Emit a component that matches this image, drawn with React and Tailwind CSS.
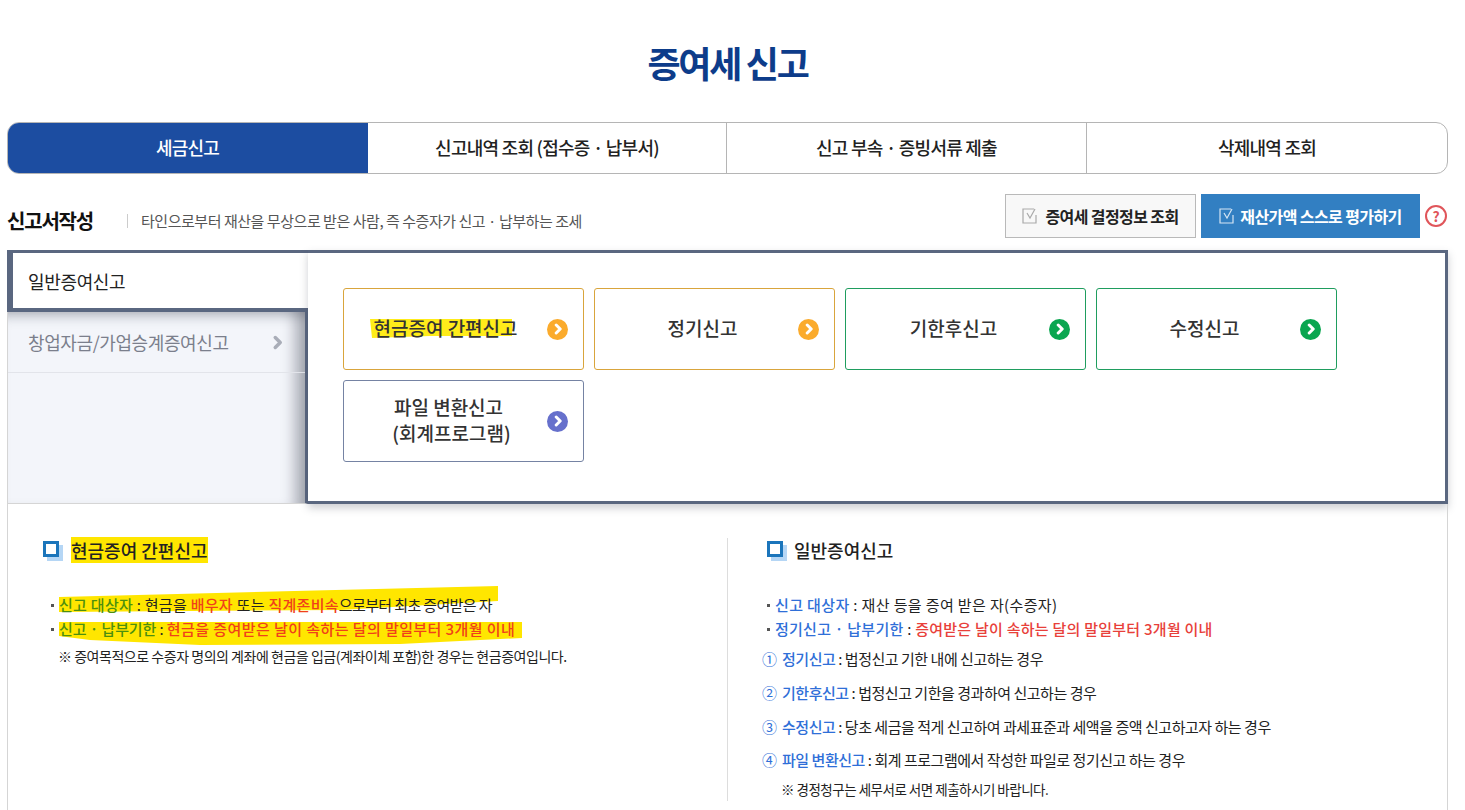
import React from 'react';

const FONT = { fontFamily: '"Noto Sans CJK KR", "Noto Sans", sans-serif' };

function Chevron({ color = '#fff', size = 12, width = 3 }) {
  return (
    <svg viewBox="0 0 12 12" width={size} height={size} fill="none" stroke={color} strokeWidth={width} strokeLinecap="round" strokeLinejoin="round">
      <path d="M4.2 2 8.2 6 4.2 10" />
    </svg>
  );
}

function CheckIcon({ color }) {
  return (
    <svg viewBox="0 0 16 16" width="16" height="16" fill="none" stroke={color} strokeWidth="1.2" className="shrink-0">
      <path d="M12 1H1v14h13V7" />
      <path d="M5 5l3 5 5-9" />
    </svg>
  );
}

function Card({ color, dot, children }) {
  return (
    <button className="relative flex h-[82px] w-[241px] items-center rounded-[3px] border bg-white pl-3 pr-[15px] text-[19px] leading-[26px] text-[#333]" style={{ borderColor: color }}>
      <span className="relative -mt-[2px] flex-1 text-center font-medium">{children}</span>
      <span className="flex h-[21px] w-[21px] shrink-0 items-center justify-center rounded-full" style={{ backgroundColor: dot }}>
        <Chevron />
      </span>
    </button>
  );
}

function SectionTitle({ children, mark }) {
  return (
    <div className={`flex h-6 items-center ${mark ? 'gap-3' : 'gap-[11px]'}`}>
      <span className="mb-[2px] h-[16px] w-[16px] shrink-0 border-[3px] border-[#1b75bb] bg-white shadow-[4px_4px_0_#b5d6f5]" />
      <h3 className="relative text-[18px] font-medium leading-6 text-[#222]">
        {mark && <span className="absolute -bottom-[1px] -top-[1px] left-0 right-0 bg-[#ffe600]" />}
        <span className="relative">{children}</span>
      </h3>
    </div>
  );
}

function Item({ n, label, children, className }) {
  return (
    <p className={`flex h-[22px] items-center text-[15px] tracking-[-0.47px] text-[#222] ${className}`}>
      <span className="w-[20px] shrink-0 text-[15px] text-[#2f6fd8]">{n}</span>
      <span className="font-medium text-[#2f6fd8]">{label}</span>
      <span className="whitespace-pre"> : {children}</span>
    </p>
  );
}

function Dot() {
  return <span className="mr-[5px] h-[3px] w-[3px] shrink-0 bg-[#555]" />;
}

export default function App() {
  return (
    <div className="flex h-screen flex-col overflow-hidden bg-white pl-[7px] pr-[17px]" style={FONT}>
      {/* 제목 */}
      <h1 className="pt-[36px] text-center text-[36px] font-bold leading-[52px] tracking-[-2.3px] text-[#0d3c8a]">증여세 신고</h1>

      {/* 상단 탭 */}
      <nav className="mt-[34px] flex h-[52px] overflow-hidden rounded-xl border border-[#b5b5b5] text-[18px] font-medium tracking-[-0.75px] text-[#222]">
        <a className="-my-px -ml-px flex w-[361px] items-center justify-center bg-[#1c4da1] pb-[2px] text-white">세금신고</a>
        <a className="flex w-[359px] items-center justify-center border-r border-[#b5b5b5] pb-[2px]">신고내역 조회 (접수증 · 납부서)</a>
        <a className="flex w-[360px] items-center justify-center border-r border-[#b5b5b5] pb-[2px]">신고 부속 · 증빙서류 제출</a>
        <a className="flex flex-1 items-center justify-center pb-[2px]">삭제내역 조회</a>
      </nav>

      {/* 신고서 작성 헤더 */}
      <div className="mt-5 flex h-[44px] items-center pr-px">
        <h2 className="mt-[10px] w-[120px] text-[20px] font-bold tracking-[-1.2px] text-[#111]">신고서작성</h2>
        <span className="mt-[10px] h-[14px] w-px bg-[#ccc]" />
        <p className="ml-[13px] mt-[10px] text-[15px] tracking-[-0.46px] text-[#555]">타인으로부터 재산을 무상으로 받은 사람, 즉 수증자가 신고 · 납부하는 조세</p>
        <button className="ml-auto flex h-[44px] w-[191px] items-center justify-center gap-[7px] border border-[#b9b9b9] bg-[#f8f8f8] text-[16px] font-bold tracking-[-0.6px] text-[#222]">
          <CheckIcon color="#a9a9a9" />증여세 결정정보 조회
        </button>
        <button className="ml-[5px] flex h-[44px] w-[219px] items-center justify-center gap-[5px] bg-[#327fc2] text-[16px] font-bold tracking-[-0.6px] text-white">
          <CheckIcon color="#d5e5f3" />재산가액 스스로 평가하기
        </button>
        <span className="ml-[5px] flex h-[22px] w-[22px] items-center justify-center rounded-full border-2 border-[#e0555a] text-[14px] font-bold leading-none text-[#e0555a]">?</span>
      </div>

      {/* 신고 유형 패널 */}
      <div className="mt-3 flex h-[254px]">
        <div className="flex w-[301px] shrink-0 flex-col">
          <div className="flex h-[62px] items-start border-b-4 border-l-[6px] border-t-[3px] border-[#5a6780] bg-white pl-[15px] pt-[15px] text-[18px] leading-[26px] tracking-[-0.35px] text-[#222]">일반증여신고</div>
          <div className="flex-1 border-b border-l border-r-[3px] border-b-[#d5d5d5] border-l-[#d5d5d5] border-r-[#5a6780] bg-[#f3f5fa] shadow-[inset_-20px_0_14px_-10px_rgba(60,65,80,0.4),inset_0_14px_12px_-10px_rgba(60,65,80,0.35)]">
            <div className="flex h-[61px] items-center justify-between border-b border-[#e2e4ea] pl-[20px] pr-[20px] pt-px text-[18px] tracking-[-0.4px] text-[#7b7f8c]">
              창업자금/가업승계증여신고
              <Chevron color="#a9adb8" size={15} width={2.8} />
            </div>
          </div>
        </div>
        <div className="flex-1 border-y-[3px] border-r-[3px] border-[#5a6780] bg-white pl-[35px] pt-[35px] shadow-[0_4px_8px_rgba(60,65,80,0.25)]">
          <div className="grid grid-cols-[repeat(4,241px)] gap-[10px]">
            <Card color="#d9a53c" dot="#fbab2c">
              <svg viewBox="0 0 142 19" preserveAspectRatio="none" className="absolute left-[14px] top-[4px] h-[19px] w-[142px]">
                <path d="M0 0H142V17H60L2 19Z" fill="#ffec1a" />
              </svg>
              <span className="relative -left-[6px]">현금증여 간편신고</span>
            </Card>
            <Card color="#d9a53c" dot="#fbab2c">정기신고</Card>
            <Card color="#1f9d5e" dot="#0aa650">기한후신고</Card>
            <Card color="#1f9d5e" dot="#0aa650">수정신고</Card>
            <Card color="#7583a3" dot="#6670cc"><span className="relative -left-[3px]">파일 변환신고</span><br />(회계프로그램)</Card>
          </div>
        </div>
      </div>

      {/* 안내 */}
      <div className="flex min-h-0 flex-1 border-x border-[#d5d5d5] pb-[9px] pt-[34px]">
        <section className="w-[720px] border-r border-[#ddd] pl-[35px]">
          <SectionTitle mark>현금증여 간편신고</SectionTitle>
          <div className="relative mt-[31px] pl-[8px] text-[15px] tracking-[-0.1px] text-[#222]">
            <svg width="490" height="66" viewBox="0 0 490 66" className="absolute left-0 -top-[9px]">
              <path d="M16 13 L455 2 L455 17 L297 26 L16 28Z" fill="#ffe600" />
              <path d="M16 38 L479 38 L479 54 L357 60 L157 61 L47 56 L16 52Z" fill="#ffe600" />
            </svg>
            <p className="relative flex h-6 items-center whitespace-pre tracking-[0.28px]">
              <Dot />
              <span className="font-medium text-[#4c8f0f]">신고 대상자</span> : 현금을 <span className="font-medium text-[#f0401a]">배우자</span> 또는 <span className="font-medium text-[#f0401a]">직계존비속</span><span className="tracking-[-0.63px]">으로부터 최초 증여받은 자</span>
            </p>
            <p className="relative flex h-6 items-center whitespace-pre">
              <Dot />
              <span className="font-medium text-[#4c8f0f]">신고 · 납부기한</span> : <span className="font-medium tracking-[0.42px] text-[#f0401a]">현금을 증여받은 날이 속하는 달의 말일부터 3개월 이내</span>
            </p>
            <p className="relative mt-[3px] pl-[7px] text-[14px] leading-[24px] tracking-[-0.47px]">※ 증여목적으로 수증자 명의의 계좌에 현금을 입금(계좌이체 포함)한 경우는 현금증여입니다.</p>
          </div>
        </section>
        <section className="flex-1 pl-[39px]">
          <SectionTitle>일반증여신고</SectionTitle>
          <div className="mt-[31px] text-[15px] text-[#222]">
            <p className="flex h-6 items-center whitespace-pre tracking-[0.37px]">
              <Dot />
              <span className="font-medium text-[#2f6fd8]">신고 대상자</span> : 재산 등을 증여 받은 자(수증자)
            </p>
            <p className="flex h-6 items-center whitespace-pre tracking-[0.25px]">
              <Dot />
              <span className="font-medium text-[#2f6fd8]">정기신고 · 납부기한</span> : <span className="font-medium text-[#e8403a]">증여받은 날이 속하는 달의 말일부터 3개월 이내</span>
            </p>
            <div className="-ml-[5px] mt-[7px]">
              <Item n="①" label="정기신고" className="">법정신고 기한 내에 신고하는 경우</Item>
              <Item n="②" label="기한후신고" className="mt-3">법정신고 기한을 경과하여 신고하는 경우</Item>
              <Item n="③" label="수정신고" className="mt-3">당초 세금을 적게 신고하여 과세표준과 세액을 증액 신고하고자 하는 경우</Item>
              <Item n="④" label="파일 변환신고" className="mt-[11px]">회계 프로그램에서 작성한 파일로 정기신고 하는 경우</Item>
            </div>
            <p className="ml-[14px] mt-2 text-[13.5px] leading-5 tracking-[-0.5px]">※ 경정청구는 세무서로 서면 제출하시기 바랍니다.</p>
          </div>
        </section>
      </div>
    </div>
  );
}
